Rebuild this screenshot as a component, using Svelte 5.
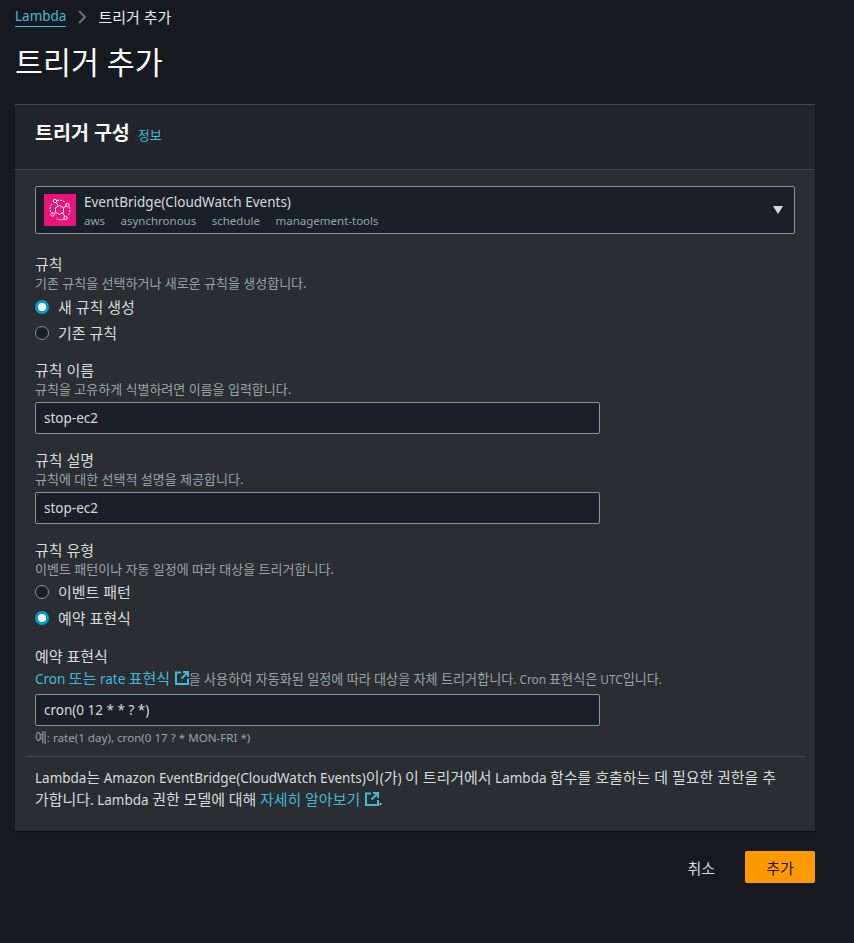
<script>
	let ruleMode = $state('new');
	let ruleType = $state('schedule');
	let ruleName = $state('stop-ec2');
	let ruleDesc = $state('stop-ec2');
	let cron = $state('cron(0 12 * * ? *)');
	const tags = ['aws', 'asynchronous', 'schedule', 'management-tools'];

	// hangul sits a bit bigger than latin in the original, so split mixed strings into runs
	const hangul = /([\uAC00-\uD7A3]+(?:\s+[\uAC00-\uD7A3]+)*)/;
	function runs(text) {
		return text.split(hangul).filter(Boolean).map((t) => ({ t, ko: hangul.test(t) }));
	}
</script>

{#snippet mixed(text)}{#each runs(text) as r}<span class:ko={r.ko}>{r.t}</span>{/each}{/snippet}

{#snippet extIcon()}
	<svg class="ext" width="14" height="14" viewBox="0 0 14 14" fill="none" stroke="currentColor" stroke-width="2">
		<path d="M6 1.500H1v11.500h12V8" />
		<path d="M8 1h5v5" />
		<path d="M12.500 1.500L6.500 7.500" />
	</svg>
{/snippet}

<div class="page">
	<nav class="crumbs">
		<a class="crumb-link" href="#lambda">Lambda</a>
		<svg width="10" height="14" viewBox="0 0 10 14" fill="none" stroke="#687078" stroke-width="2"><path d="M2 1l6 6-6 6" /></svg>
		<span>트리거 추가</span>
	</nav>

	<h1>트리거 추가</h1>

	<section class="card">
		<header class="card-head">
			<h2>트리거 구성</h2>
			<a class="info" href="#info">정보</a>
		</header>

		<div class="card-body">
			<div class="select">
				<div class="logo">
					<svg width="32" height="32" viewBox="0 0 32 32" fill="none" stroke="#fff" stroke-width="1">
						<path d="M15.500 11.500l4 2.300v4.400l-4 2.300-4-2.300v-4.400z" />
						<circle cx="11" cy="7" r="1.700" />
						<circle cx="23.500" cy="11" r="1.700" />
						<circle cx="21.500" cy="24" r="1.700" />
						<circle cx="8.500" cy="20.500" r="1.700" />
						<path d="M13 6.500c3-.8 6-.2 8.500 2" stroke-dasharray="2 1" />
						<path d="M25.500 13c1 3 .5 6-1.500 8.500" stroke-dasharray="2 1" />
						<path d="M19.500 25.500c-2.500.5-5 .3-7-.8" stroke-dasharray="2 1" />
						<path d="M6.500 18c-1-3-.5-6 1.500-8.500" stroke-dasharray="2 1" />
						<path d="M12 8.500l2 3M21.800 12l-2.300 2M20.800 22.300l-2-3M10.300 19.500l1.500-1" />
					</svg>
				</div>
				<div class="select-text">
					<div class="select-title">EventBridge(CloudWatch Events)</div>
					<div class="tags">
						{#each tags as tag}
							<span>{tag}</span>
						{/each}
					</div>
				</div>
				<span class="caret"></span>
			</div>

			<div class="field rule-field">
				<div class="label">규칙</div>
				<div class="hint">기존 규칙을 선택하거나 새로운 규칙을 생성합니다.</div>
				<div class="radios first">
					<label class="radio"><input type="radio" bind:group={ruleMode} value="new" /><span>새 규칙 생성</span></label>
					<label class="radio"><input type="radio" bind:group={ruleMode} value="existing" /><span>기존 규칙</span></label>
				</div>
			</div>

			<div class="field name-field">
				<div class="label">규칙 이름</div>
				<div class="hint">규칙을 고유하게 식별하려면 이름을 입력합니다.</div>
				<input class="text" type="text" bind:value={ruleName} />
			</div>

			<div class="field">
				<div class="label">규칙 설명</div>
				<div class="hint">규칙에 대한 선택적 설명을 제공합니다.</div>
				<input class="text" type="text" bind:value={ruleDesc} />
			</div>

			<div class="field">
				<div class="label">규칙 유형</div>
				<div class="hint">이벤트 패턴이나 자동 일정에 따라 대상을 트리거합니다.</div>
				<div class="radios">
					<label class="radio"><input type="radio" bind:group={ruleType} value="pattern" /><span>이벤트 패턴</span></label>
					<label class="radio"><input type="radio" bind:group={ruleType} value="schedule" /><span>예약 표현식</span></label>
				</div>
			</div>

			<div class="field cron-field">
				<div class="label">예약 표현식</div>
				<div class="desc"><a href="#cron">{@render mixed('Cron 또는 rate 표현식')} {@render extIcon()}</a>{@render mixed('을 사용하여 자동화된 일정에 따라 대상을 자체 트리거합니다. Cron 표현식은 UTC입니다.')}</div>
				<input class="text cron" type="text" bind:value={cron} />
				<div class="example">{@render mixed('예: rate(1 day), cron(0 17 ? * MON-FRI *)')}</div>
			</div>
		</div>

		<div class="notice">
			<p>{@render mixed('Lambda는 Amazon EventBridge(CloudWatch Events)이(가) 이 트리거에서 Lambda 함수를 호출하는 데 필요한 권한을 추')}<br />{@render mixed('가합니다. Lambda 권한 모델에 대해 ')}<a href="#more">{@render mixed('자세히 알아보기')} {@render extIcon()}</a>.</p>
		</div>
	</section>

	<div class="actions">
		<button class="cancel">취소</button>
		<button class="primary">추가</button>
	</div>
</div>

<style>
	:global(body) {
		background: #16191f;
	}
	.page {
		box-sizing: border-box;
		width: 854px;
		height: 943px;
		padding: 0 39px 0 15px;
		background: #16191f;
		color: #eaeded;
		font-family: "Noto Sans", "Noto Sans CJK KR", sans-serif;
		font-size: 14px;
		line-height: 20px;
		overflow: hidden;
	}
	a {
		color: #44b9d6;
		text-decoration: none;
	}
	.ko {
		font-size: 1.11em;
		line-height: 1;
	}
	.crumbs {
		display: flex;
		align-items: center;
		gap: 11px;
		height: 34px;
		font-size: 13.500px;
	}
	.crumbs > span {
		font-size: 15px;
	}
	.crumb-link {
		border-bottom: 1px solid #44b9d6;
		line-height: 19px;
	}
	h1 {
		margin: 0;
		height: 70px;
		font-size: 30.400px;
		line-height: 58px;
		font-weight: 400;
		color: #fafafa;
	}
	.card {
		background: #2a2e33;
		border-top: 1px solid #414750;
		box-shadow: 0 1px 1px #0c0e12;
		height: 726px;
	}
	.card-head {
		display: flex;
		align-items: baseline;
		gap: 8px;
		box-sizing: border-box;
		height: 65px;
		padding: 14px 20px 0;
		background: #22262c;
		border-bottom: 1px solid #414750;
	}
	h2 {
		margin: 0;
		font-size: 19.500px;
		line-height: 28px;
		font-weight: 700;
		color: #fafafa;
	}
	.info {
		font-size: 13px;
	}
	.card-body {
		padding: 16px 20px 0;
	}
	.select {
		display: flex;
		align-items: center;
		box-sizing: border-box;
		height: 48px;
		padding: 0 8px;
		background: #1a2029;
		border: 1px solid #879596;
		border-radius: 2px;
	}
	.logo {
		display: flex;
		align-items: center;
		justify-content: center;
		width: 32px;
		height: 32px;
		background: #e7157b;
		flex: none;
	}
	.select-text {
		flex: 1;
		margin-left: 8px;
		padding-top: 2px;
	}
	.select-title {
		font-size: 13.500px;
		line-height: 19px;
		color: #d5dbdb;
	}
	.tags {
		display: flex;
		gap: 15.500px;
		font-size: 11.500px;
		line-height: 17px;
		color: #95a5a6;
	}
	.caret {
		width: 0;
		height: 0;
		margin-right: 3px;
		border-left: 5px solid transparent;
		border-right: 5px solid transparent;
		border-top: 8px solid #d5dbdb;
	}
	.field {
		margin-top: 16px;
	}
	.rule-field {
		margin-top: 20px;
	}
	.name-field {
		margin-top: 14px;
	}
	.cron-field {
		margin-top: 15px;
	}
	.label {
		font-size: 15px;
		line-height: 20px;
		color: #d5dbdb;
	}
	.hint {
		margin-top: 1px;
		font-size: 13px;
		line-height: 16px;
		color: #95a5a6;
	}
	.desc {
		margin-top: 3px;
		font-size: 11.800px;
		line-height: 20px;
		color: #95a5a6;
	}
	.desc a {
		font-size: 13.500px;
	}
	.ext {
		vertical-align: -1px;
		margin-left: 1px;
	}
	.radios {
		margin-top: 2px;
	}
	.radios.first {
		margin-top: 3px;
	}
	.radio {
		display: flex;
		align-items: center;
		gap: 9px;
		height: 26px;
		font-size: 15px;
		color: #d5dbdb;
	}
	.radio input {
		appearance: none;
		box-sizing: border-box;
		width: 14px;
		height: 14px;
		margin: 0;
		border-radius: 50%;
		background: #1a2029;
		border: 1px solid #879596;
	}
	.radio input:checked {
		background: #fff;
		border: 3.500px solid #00a1c9;
	}
	input.text {
		display: block;
		box-sizing: border-box;
		width: 565px;
		height: 32px;
		margin-top: 5px;
		padding: 0 8px;
		background: #1a2029;
		border: 1px solid #879596;
		border-radius: 2px;
		color: #d5dbdb;
		font-family: inherit;
		font-size: 13.500px;
		outline: none;
	}
	.example {
		margin-top: 4px;
		font-size: 11.600px;
		line-height: 16px;
		color: #95a5a6;
	}
	.notice {
		margin-top: 10px;
		padding: 0 20px;
	}
	.notice::before {
		content: "";
		display: block;
		height: 1px;
		margin: 0 -10px;
		background: #414750;
	}
	.notice p {
		margin: 10px 0 0;
		font-size: 13.500px;
		line-height: 22px;
		color: #d5dbdb;
	}
	.actions {
		display: flex;
		justify-content: flex-end;
		align-items: center;
		gap: 30px;
		margin-top: 20px;
	}
	button {
		font-family: inherit;
		font-size: 15px;
		border: 0;
		border-radius: 2px;
		cursor: pointer;
	}
	.cancel {
		padding: 0;
		background: none;
		color: #d5dbdb;
	}
	.primary {
		width: 70px;
		height: 32px;
		background: #ff9900;
		color: #16191f;
	}
</style>
